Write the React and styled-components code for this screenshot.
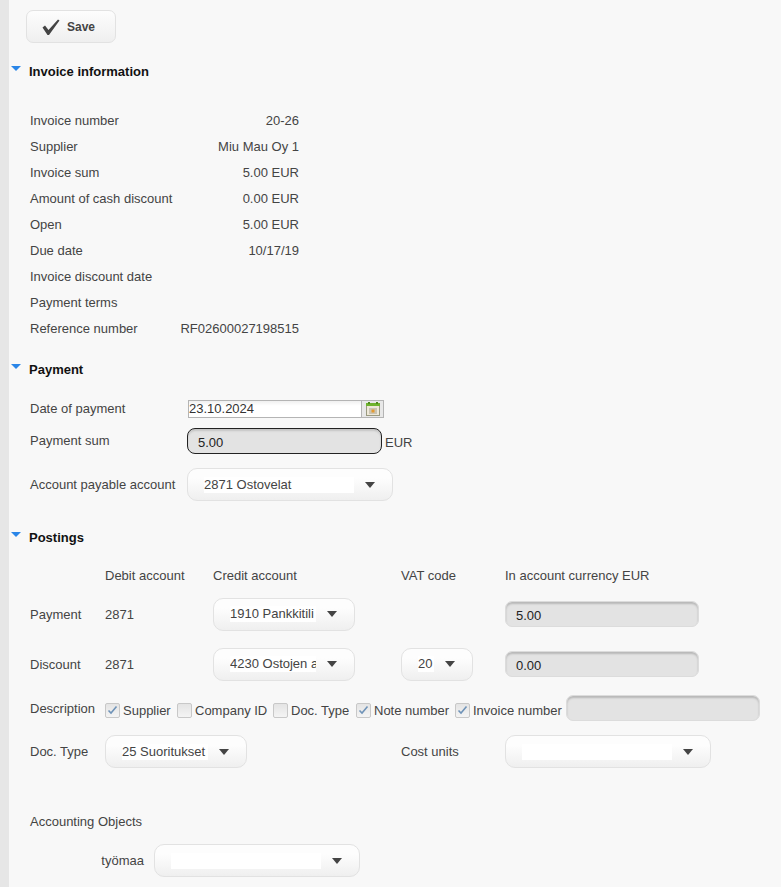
import React from "react";
import styled, { createGlobalStyle } from "styled-components";

const Global = createGlobalStyle`
  html, body { margin: 0; padding: 0; background: #f8f8f8; }
  body { font-family: "Liberation Sans", Arial, sans-serif; font-size: 13px; color: #444; }
`;

const Page = styled.div`
  box-sizing: border-box;
  width: 781px;
  height: 887px;
  overflow: hidden;
  border-left: 9px solid #e6e6e6;
  padding: 10px 0 0 21px;
  background: #f8f8f8;
`;
const Toolbar = styled.div`
  display: flex;
  margin-left: -4px;
`;
const SaveButton = styled.button`
  box-sizing: border-box;
  width: 90px;
  height: 33px;
  display: flex;
  align-items: center;
  gap: 6px;
  padding: 0 0 0 14px;
  border: 1px solid #e2e2e2;
  border-radius: 7px;
  background: linear-gradient(#fdfdfd, #efefef);
  font: bold 12px "Liberation Sans", Arial, sans-serif;
  color: #444;
`;
const Heading = styled.h2`
  display: flex;
  align-items: center;
  height: 18px;
  margin: ${p => p.$top}px 0 0 -19px;
  font-size: 13px;
  font-weight: bold;
  color: #111;
`;
const Caret = styled.span`
  width: 0;
  height: 0;
  margin: -6px 8px 0 0;
  border-left: 5px solid transparent;
  border-right: 5px solid transparent;
  border-top: 5px solid #2a86e8;
`;
const InfoList = styled.div`
  width: 269px;
  margin-top: 27px;
`;
const InfoRow = styled.div`
  display: flex;
  justify-content: space-between;
  align-items: center;
  height: 26px;
`;
const FormRow = styled.div`
  display: flex;
  align-items: center;
  height: ${p => p.$h}px;
  margin-top: ${p => p.$top || 0}px;
`;
const FormLabel = styled.span`
  width: 157px;
  flex: none;
  margin-top: ${p => (p.$raised ? -2 : 0)}px;
`;
const DateField = styled.div`
  display: flex;
  box-sizing: border-box;
  width: 196px;
  height: 18px;
  margin-left: 1px;
  border: 1px solid #b4b4b4;
`;
const DateInput = styled.span`
  flex: 1;
  line-height: 16px;
  font-size: 13px;
  background: linear-gradient(#f0f0f0, #fff 30%);
  color: #333;
`;
const CalendarButton = styled.span`
  width: 21px;
  display: flex;
  align-items: center;
  justify-content: center;
  border-left: 1px solid #b4b4b4;
  background: #e8e8e8;
`;
const SumInput = styled.div`
  box-sizing: border-box;
  width: 195px;
  height: 26px;
  padding-left: 10px;
  line-height: 28px;
  border: 1px solid #222;
  border-radius: 8px;
  background: #e3e3e3;
  box-shadow: inset 0 2px 2px #c4c4c4;
  color: #222;
`;
const Unit = styled.span`
  margin: 2px 0 0 3px;
`;
const SelectBox = styled.div`
  box-sizing: border-box;
  flex: none;
  display: flex;
  align-items: center;
  width: ${p => p.$w}px;
  height: 33px;
  padding-left: 16px;
  border: 1px solid #e2e2e2;
  border-radius: 10px;
  background: linear-gradient(#fdfdfd 30%, #efefef);
`;
const SelectText = styled.span`
  width: ${p => p.$w}px;
  height: 16px;
  line-height: 16px;
  overflow: hidden;
  white-space: nowrap;
  background: #fff;
  color: #444;
`;
const SelectArrow = styled.span`
  width: 0;
  height: 0;
  margin-left: 11px;
  border-left: 5.5px solid transparent;
  border-right: 5.5px solid transparent;
  border-top: 6px solid #444;
`;
const PostingGrid = styled.div`
  display: grid;
  grid-template-columns: 75px 108px 188px 104px 1fr;
  grid-template-rows: 25px 50px 50px;
  align-items: center;
  margin-top: 18px;
  height: 125px;
`;
const ColumnHead = styled.span`
  align-self: start;
  line-height: 23px;
`;
const GreyInput = styled.div`
  box-sizing: border-box;
  width: 194px;
  height: 26px;
  padding-left: 10px;
  line-height: 28px;
  border: 1px solid #dcdcdc;
  border-radius: 7px;
  background: #e3e3e3;
  box-shadow: inset 0 2px 2px #b8b8b8;
  color: #222;
`;
const DescriptionRow = styled.div`
  display: flex;
  align-items: center;
  height: 26px;
  margin-top: 6px;
`;
const DescriptionLabel = styled.span`
  width: 75px;
`;
const CheckItem = styled.label`
  box-sizing: border-box;
  display: flex;
  align-items: center;
  gap: 3px;
  width: ${p => p.$w}px;
  margin-top: 4px;
`;
const CheckBox = styled.span`
  box-sizing: border-box;
  flex: none;
  width: 15px;
  height: 15px;
  display: flex;
  align-items: center;
  justify-content: center;
  border: 1px solid #c8c8c8;
  border-radius: 2px;
  background: linear-gradient(#e4e4e4, #f4f4f4);
`;
const LowerGrid = styled.div`
  display: grid;
  grid-template-columns: 75px 296px 104px 1fr;
  align-items: center;
  height: 33px;
  margin-top: 14px;
`;
const ObjectsTitle = styled.div`
  margin-top: 46px;
  height: 16px;
  line-height: 16px;
`;
const ObjectRow = styled.div`
  display: flex;
  align-items: center;
  margin-top: 14px;
`;
const ObjectLabel = styled.span`
  width: 124px;
  padding-right: 10px;
  box-sizing: border-box;
  text-align: right;
`;

const Check = () => (
  <svg width="20" height="18" viewBox="0 0 20 18" aria-hidden="true">
    <path d="M1.5 9.5 L4 7.5 L7.5 12 L17 1.5 L18.5 2.5 L8 17 L6.5 17 Z" fill="#444" />
  </svg>
);
const Tick = () => (
  <svg width="11" height="10" viewBox="0 0 11 10" aria-hidden="true">
    <path d="M1.5 5.5 L4 8 L9.5 1.5" fill="none" stroke="#6f93b8" strokeWidth="1.6" />
  </svg>
);
const Calendar = () => (
  <svg width="14" height="14" viewBox="0 0 14 14" aria-hidden="true">
    <rect x="0.5" y="1.5" width="13" height="12" fill="#eee8d8" stroke="#9a9a80" />
    <rect x="0" y="1" width="14" height="3" fill="#6fb32e" />
    <rect x="2" y="0" width="2" height="2" fill="#4e8a1c" />
    <rect x="10" y="0" width="2" height="2" fill="#4e8a1c" />
    <rect x="3" y="6" width="8" height="6" fill="#c9c4b4" />
    <rect x="5.5" y="7.5" width="3" height="3" fill="#e59a2e" />
  </svg>
);

const Select = ({ w, textW, children }) => (
  <SelectBox $w={w}>
    <SelectText $w={textW}>{children}</SelectText>
    <SelectArrow />
  </SelectBox>
);

const Option = ({ on, w, children }) => (
  <CheckItem $w={w}>
    <CheckBox>{on && <Tick />}</CheckBox>
    {children}
  </CheckItem>
);

const info = [
  ["Invoice number", "20-26"],
  ["Supplier", "Miu Mau Oy 1"],
  ["Invoice sum", "5.00 EUR"],
  ["Amount of cash discount", "0.00 EUR"],
  ["Open", "5.00 EUR"],
  ["Due date", "10/17/19"],
  ["Invoice discount date", ""],
  ["Payment terms", ""],
  ["Reference number", "RF02600027198515"],
];

export default function App() {
  return (
    <Page>
      <Global />
      <Toolbar>
        <SaveButton><Check />Save</SaveButton>
      </Toolbar>

      <Heading $top={19}><Caret />Invoice information</Heading>
      <InfoList>
        {info.map(([k, v]) => (
          <InfoRow key={k}><span>{k}</span><span>{v}</span></InfoRow>
        ))}
      </InfoList>

      <Heading $top={19}><Caret />Payment</Heading>
      <FormRow $h={18} $top={22}>
        <FormLabel $raised>Date of payment</FormLabel>
        <DateField>
          <DateInput>23.10.2024</DateInput>
          <CalendarButton><Calendar /></CalendarButton>
        </DateField>
      </FormRow>
      <FormRow $h={26} $top={10}>
        <FormLabel $raised>Payment sum</FormLabel>
        <SumInput>5.00</SumInput>
        <Unit>EUR</Unit>
      </FormRow>
      <FormRow $h={33} $top={14}>
        <FormLabel>Account payable account</FormLabel>
        <Select w={206} textW={150}>2871 Ostovelat</Select>
      </FormRow>

      <Heading $top={27}><Caret />Postings</Heading>
      <PostingGrid>
        <span />
        <ColumnHead>Debit account</ColumnHead>
        <ColumnHead>Credit account</ColumnHead>
        <ColumnHead>VAT code</ColumnHead>
        <ColumnHead>In account currency EUR</ColumnHead>

        <span>Payment</span>
        <span>2871</span>
        <Select w={142} textW={86}>1910 Pankkitili</Select>
        <span />
        <GreyInput>5.00</GreyInput>

        <span>Discount</span>
        <span>2871</span>
        <Select w={142} textW={86}>4230 Ostojen a</Select>
        <Select w={72} textW={16}>20</Select>
        <GreyInput>0.00</GreyInput>
      </PostingGrid>

      <DescriptionRow>
        <DescriptionLabel>Description</DescriptionLabel>
        <Option on w={72}>Supplier</Option>
        <Option w={96}>Company ID</Option>
        <Option w={83}>Doc. Type</Option>
        <Option on w={99}>Note number</Option>
        <Option on w={111}>Invoice number</Option>
        <GreyInput />
      </DescriptionRow>

      <LowerGrid>
        <span>Doc. Type</span>
        <Select w={142} textW={86}>25 Suoritukset</Select>
        <span>Cost units</span>
        <Select w={206} textW={150} />
      </LowerGrid>

      <ObjectsTitle>Accounting Objects</ObjectsTitle>
      <ObjectRow>
        <ObjectLabel>työmaa</ObjectLabel>
        <Select w={206} textW={150} />
      </ObjectRow>
    </Page>
  );
}
